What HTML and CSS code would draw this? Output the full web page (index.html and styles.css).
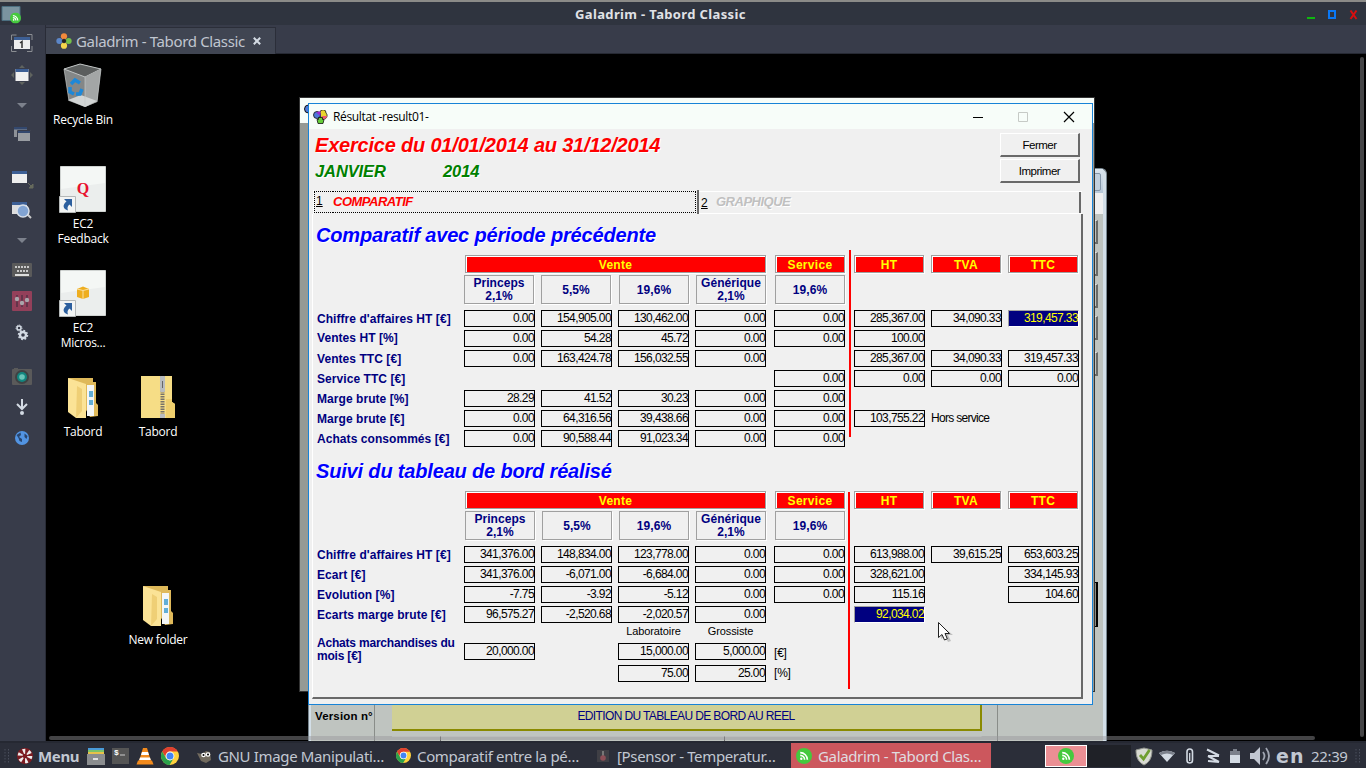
FILE: index.html
```html
<!DOCTYPE html>
<html lang="fr">
<head>
<meta charset="utf-8">
<title>Galadrim - Tabord Classic</title>
<link rel="stylesheet" href="styles.css">
</head>
<body>
<svg width="0" height="0" class="defs">
  <symbol id="feed" viewBox="0 0 16 16"><circle cx="8" cy="8" r="8" fill="#45c93e"/><circle cx="5.3" cy="10.8" r="1.2" fill="#fff"/><path d="M4.2 7.4a4.4 4.4 0 0 1 4.4 4.4M4.2 4.6a7.2 7.2 0 0 1 7.2 7.2" stroke="#fff" stroke-width="1.6" fill="none"/></symbol>
  <symbol id="chrome" viewBox="0 0 18 18"><circle cx="9" cy="9" r="9" fill="#ffd23e"/><path d="M1.2 4.5A9 9 0 0 1 16.8 4.5H9A4.5 4.5 0 0 0 5 11z" fill="#e0402f"/><path d="M1.2 4.5A9 9 0 0 0 8.6 18l4-6.8A4.5 4.5 0 0 1 5 11.2z" fill="#2ba24c"/><circle cx="9" cy="9" r="4.4" fill="#fff"/><circle cx="9" cy="9" r="3.5" fill="#4285f4"/></symbol>
  <symbol id="caret" viewBox="0 0 10 6"><path d="M0 0h10L5 5z" fill="#7c818c"/></symbol>
  <symbol id="shortcut" viewBox="0 0 17 17"><path d="M.5.5h16v16H.5z" fill="#f2f4f4" stroke="#b4b8b8"/><path d="M5 3h8v8l-2.500-2.500C8.500 10 8 12 9 14.500 4 13 3 9 7.500 5.500z" fill="#2c5f9e"/></symbol>
</svg>

<header class="titlebar">
  <svg class="appicon" width="20" height="18" viewBox="0 0 20 18"><path d="M1 .5h18v14H1z" fill="#7b94a0" stroke="#4c6f80"/><use href="#feed" x="9" y="6.500" width="11" height="11"/></svg>
  <span class="maintitle">Galadrim - Tabord Classic</span>
  <svg class="winbtns" width="56" height="12" viewBox="0 0 56 12"><path d="M1 9h8v2H1z" fill="#0fb60f"/><path d="M23 3h6v7h-6z" fill="none" stroke="#0a78f5" stroke-width="2"/><path d="M44.500 2.500l6 8.500M50.500 2.500l-6 8.500" stroke="#d80f0f" stroke-width="2"/></svg>
</header>

<div class="main">
  <nav class="side">
    <svg width="45" height="690" viewBox="0 0 45 690">
      <g fill="none" stroke="#8a8d92"><path d="M11.500 15v-5h5M27 9.500h5V15M11.500 21v5.500h5M27 26.500h5V21"/></g>
      <path d="M14 12h16v12H14z" fill="#eee"/><path d="M14 12h16v3H14z" fill="#3d5f95"/><path d="M20 18l2-1.500V23" stroke="#333" stroke-width="1.500" fill="none"/>
      <path d="M19 43l3-3 3 3zM19 57l3 3 3-3zM14 47l-3 3 3 3zM30 47l3 3-3 3z" fill="#5f635f"/>
      <path d="M15.500 44h13v12h-13z" fill="#f0f0f0"/><path d="M15.500 44h13v3h-13z" fill="#3d5f95"/>
      <use href="#caret" x="17" y="78" width="10" height="6"/>
      <path d="M14 102h13v10H14z" fill="#8d9197"/><path d="M14 102h13v2.500H14z" fill="#33486e"/><path d="M17.500 105.500h13v11h-13z" fill="#999da2" stroke="#383c4a"/><path d="M18 106h12v2H18z" fill="#33486e"/>
      <path d="M12 146h15v12H12z" fill="#eee"/><path d="M12 146h15v3H12z" fill="#3d5f95"/><path d="M33 159v4h-4zM28 158l4 4" fill="#666a5c" stroke="#666a5c"/>
      <path d="M12 177h15v12H12z" fill="#ddd"/><path d="M12 177h15v3H12z" fill="#3d5f95"/><path d="M27 189l4 4" stroke="#ccc" stroke-width="2"/><circle cx="23" cy="186" r="6" fill="#82a4d3" stroke="#d8dfe8" stroke-width="1.500"/>
      <use href="#caret" x="17" y="213" width="10" height="6"/>
      <rect x="12" y="238" width="20" height="14" rx="1" fill="#5a5a5a"/><path d="M15 242h14M17 246h12" stroke="#c9c9c9" stroke-width="2" stroke-dasharray="2 1"/><path d="M15 250h14" stroke="#ddd" stroke-width="2"/>
      <rect x="12" y="266" width="20" height="20" rx="1" fill="#93405a"/><path d="M17 270v12M22 270v12M27 270v12" stroke="#64344a" stroke-width="2"/><g fill="#a9a5ab"><circle cx="17" cy="274" r="2.200"/><circle cx="22" cy="278" r="2.200"/><circle cx="27" cy="275" r="2.200"/></g>
      <g fill="none" stroke="#d3dae3"><circle cx="19" cy="303" r="2" stroke-width="1.500"/><circle cx="19" cy="303" r="3" stroke-dasharray="1 1"/><circle cx="23" cy="310" r="3" stroke-width="2.400"/><circle cx="23" cy="310" r="4.500" stroke-dasharray="1.800 1.700" stroke-width="1.500"/></g>
      <rect x="12" y="344" width="20" height="16" rx="1" fill="#5a5a5a"/><path d="M14 343h4v2h-4z" fill="#5a5a5a"/><circle cx="22" cy="352" r="7" fill="#3e4244"/><circle cx="22" cy="352" r="5" fill="#12867f"/><circle cx="22" cy="352" r="2.800" fill="#69c5b9"/>
      <path d="M22 374v10M17 379l5 5 5-5" stroke="#d3dae3" stroke-width="2" fill="none"/><circle cx="22" cy="388" r="2" fill="#d3dae3"/>
      <circle cx="22" cy="413" r="7" fill="#5294e2"/><path d="M16.500 410l4-2.500.5 2.500-2 2 3 2v3l-2.500-1-1-3zM24.500 408.500l3 2.500-1 3-2-2z" fill="#29466f"/>
    </svg>
  </nav>
  <section class="view">
    <div class="tabstrip"><div class="tab">
      <svg width="16" height="16" viewBox="0 0 16 16"><circle cx="8" cy="3.300" r="3.100" fill="#f28a3c"/><circle cx="3.300" cy="8" r="3" fill="#5b86c8"/><circle cx="12.700" cy="8" r="3" fill="#73c04b"/><circle cx="8" cy="12.700" r="3.100" fill="#f5d64c"/><path d="M8 5.500L10.500 8 8 10.500 5.500 8z" fill="#222"/></svg>
      <span class="tabname">Galadrim - Tabord Classic</span>
      <svg width="8" height="8" viewBox="0 0 8 8"><path d="M.8.8l6.400 6.400M7.200.8L.8 7.200" stroke="#d3dae3" stroke-width="2"/></svg>
    </div></div>
    <div class="desktop"></div>
  </section>
</div>

<div class="dicon i1"><svg width="40" height="46" viewBox="0 0 40 46"><path d="M1 6L17 1l21 5-4 33-12 5-16-6z" fill="#848787"/><path d="M1 6l16-5 21 5-16 8z" fill="#5b5e5e" stroke="#bfc3c3"/><path d="M22 14l16-8-4 33-12 5z" fill="#a3a6a6"/><path d="M5 37l13-5 16 6-12 6z" fill="#d2d5d5"/><path d="M1 6l5 32M22 14v30M38 6l-4 33" stroke="#c3c7c7" stroke-width=".7"/><path d="M8 21l4-4 5 3M7 24v5l4 2M13 31h4l2-5" fill="none" stroke="#1e88d8" stroke-width="3.500"/></svg><span>Recycle Bin</span></div>
<div class="dicon i2"><svg width="48" height="48" viewBox="0 0 48 48"><path d="M1.500 1.500h45v45h-45z" fill="#f4f7f5" stroke="#cfd3d1"/><path d="M2 24l44-6v28H2z" fill="#ebeeed"/><text x="24" y="29" text-anchor="middle" class="qmark">Q</text><use href="#shortcut" x="0" y="31" width="17" height="17"/></svg><span>EC2<br>Feedback</span></div>
<div class="dicon i3"><svg width="48" height="48" viewBox="0 0 48 48"><path d="M1.500 1.500h45v45h-45z" fill="#f4f7f5" stroke="#cfd3d1"/><path d="M2 24l44-6v28H2z" fill="#ebeeed"/><path d="M18 20l6-2.500 6 2.500v8l-6 2-6-2z" fill="#eeae20"/><path d="M18 20l6 1.500 6-1.500M24 21.500V30" stroke="#fbe0a0" fill="none"/><use href="#shortcut" x="0" y="31" width="17" height="17"/></svg><span>EC2<br>Micros...</span></div>
<div class="dicon i4"><svg width="32" height="42" viewBox="0 0 32 42"><path d="M1 1h25v4h3v21l2 2v11l-8 1z" fill="#dfb95a"/><path d="M20 8h7v31h-7z" fill="#f3f6f7"/><path d="M22 14h4v6h-4zM22 23h4v5h-4z" fill="#62aed6"/><path d="M1 1l18 6v34H9L1 35z" fill="#fbe396"/><path d="M10 9l5 3v22l-6 7z" fill="#efcf76"/></svg><span>Tabord</span></div>
<div class="dicon i5"><svg width="36" height="44" viewBox="0 0 36 44"><path d="M1 1h31v26l3 2v14H1z" fill="#f6dd86"/><path d="M26 24h6v3l3 2v14h-9z" fill="#efcf6d"/><path d="M22.500 1v42" stroke="#77736a" stroke-width="4" stroke-dasharray="1.500 1"/><rect x="20" y="1" width="5" height="16" rx="1" fill="#b9bcc0"/><path d="M22.500 6v7" stroke="#666"/><path d="M20 39h5v4h-5z" fill="#b9bcc0"/></svg><span>Tabord</span></div>
<div class="dicon i6"><svg width="32" height="42" viewBox="0 0 32 42"><path d="M1 1h25v4h3v21l2 2v11l-8 1z" fill="#dfb95a"/><path d="M20 8h7v31h-7z" fill="#f3f6f7"/><path d="M22 14h4v6h-4zM22 23h4v5h-4z" fill="#62aed6"/><path d="M1 1l18 6v34H9L1 35z" fill="#fbe396"/><path d="M10 9l5 3v22l-6 7z" fill="#efcf76"/></svg><span>New folder</span></div>

<div class="aero">
  <div class="aerocap"><i></i></div><div class="aeromenu"></div>
  <div class="aerobody">
    <div class="sidebtns"><i></i><i></i><i></i><i></i><i class="gapped"></i><i class="big"></i></div>
    <div class="aerofoot">
      <b class="version">Version n°</b>
      <div class="edition"><div class="khaki">EDITION DU TABLEAU DE BORD AU REEL</div><div class="lower"><i></i><i></i><i></i></div></div>
      <div class="rule"></div>
    </div>
  </div>
</div>
<div class="backwin"><div class="backcap"><svg width="14" height="14" viewBox="0 0 14 14"><circle cx="4.500" cy="5" r="4" fill="#4e79d8" stroke="#111"/></svg></div></div>

<div class="window">
  <div class="wcap">
    <svg width="15" height="14" viewBox="0 0 15 14"><path d="M7 2.500A3 3 0 0 1 13 3c2 2 1 5-1 6H8z" fill="#e8d42c" stroke="#111" stroke-width=".8"/><path d="M9 6h5c0 2-2 3-4 3z" fill="#ef5570"/><circle cx="4" cy="5" r="3.500" fill="#4e79d8" stroke="#111" stroke-width=".8"/><path d="M3 2.500L7.500 1v5z" fill="#9c2ad0"/><path d="M5.500 7.500h4v2H11l-1 4H5l-1-4h1.500z" fill="#66cf3a" stroke="#111" stroke-width=".8"/></svg>
    <span class="wname">Résultat -result01-</span>
    <svg class="wctl" width="104" height="12" viewBox="0 0 104 12"><path d="M0 6.500h10" stroke="#000"/><path d="M45.500 1.500h9v9h-9z" stroke="#c6cac6" fill="none"/><path d="M91 1l10 10M101 1L91 11" stroke="#000" stroke-width="1.200"/></svg>
  </div>
  <div class="whead">
    <div class="heads"><div class="exercice">Exercice du 01/01/2014 au 31/12/2014</div><div class="mois"><span class="janvier">JANVIER</span><span>2014</span></div></div>
    <div class="btns"><div class="btn">Fermer</div><div class="btn">Imprimer</div></div>
  </div>
  <div class="tabs">
    <div class="t1"><u>1</u><b>COMPARATIF</b></div>
    <div class="t2"><u>2</u><b>GRAPHIQUE</b></div>
  </div>
  <div class="panel">
    <div class="section s1">
      <h2>Comparatif avec période précédente</h2>
      <div class="row hd"><span class="red wide c1">Vente</span><span class="red c5">Service</span><span class="red c6">HT</span><span class="red c7">TVA</span><span class="red c8">TTC</span></div>
      <div class="row sub"><span class="sb c1">Princeps<br>2,1%</span><span class="sb c2">5,5%</span><span class="sb shift c3">19,6%</span><span class="sb shift c4">Générique<br>2,1%</span><span class="sb shift c5">19,6%</span></div>
      <div class="row"><span class="lab">Chiffre d'affaires HT [€]</span><span class="cell c1">0.00</span><span class="cell c2">154,905.00</span><span class="cell c3">130,462.00</span><span class="cell c4">0.00</span><span class="cell c5">0.00</span><span class="cell c6">285,367.00</span><span class="cell c7">34,090.33</span><span class="cell sel c8">319,457.33</span></div>
      <div class="row"><span class="lab up">Ventes HT [%]</span><span class="cell c1">0.00</span><span class="cell c2">54.28</span><span class="cell c3">45.72</span><span class="cell c4">0.00</span><span class="cell c5">0.00</span><span class="cell c6">100.00</span></div>
      <div class="row"><span class="lab">Ventes TTC [€]</span><span class="cell c1">0.00</span><span class="cell c2">163,424.78</span><span class="cell c3">156,032.55</span><span class="cell c4">0.00</span><span class="cell c6">285,367.00</span><span class="cell c7">34,090.33</span><span class="cell c8">319,457.33</span></div>
      <div class="row"><span class="lab">Service TTC [€]</span><span class="cell c5">0.00</span><span class="cell c6">0.00</span><span class="cell c7">0.00</span><span class="cell c8">0.00</span></div>
      <div class="row"><span class="lab">Marge brute [%]</span><span class="cell c1">28.29</span><span class="cell c2">41.52</span><span class="cell c3">30.23</span><span class="cell c4">0.00</span><span class="cell c5">0.00</span></div>
      <div class="row"><span class="lab">Marge brute [€]</span><span class="cell c1">0.00</span><span class="cell c2">64,316.56</span><span class="cell c3">39,438.66</span><span class="cell c4">0.00</span><span class="cell c5">0.00</span><span class="cell c6">103,755.22</span><span class="note hors c7">Hors service</span></div>
      <div class="row"><span class="lab">Achats consommés [€]</span><span class="cell c1">0.00</span><span class="cell c2">90,588.44</span><span class="cell c3">91,023.34</span><span class="cell c4">0.00</span><span class="cell c5">0.00</span></div>
    </div>
    <div class="section s2">
      <h2>Suivi du tableau de bord réalisé</h2>
      <div class="row hd"><span class="red wide c1">Vente</span><span class="red c5">Service</span><span class="red c6">HT</span><span class="red c7">TVA</span><span class="red c8">TTC</span></div>
      <div class="row sub"><span class="sb shift c1">Princeps<br>2,1%</span><span class="sb shift c2">5,5%</span><span class="sb shift c3">19,6%</span><span class="sb shift c4">Générique<br>2,1%</span><span class="sb shift c5">19,6%</span></div>
      <div class="row"><span class="lab">Chiffre d'affaires HT [€]</span><span class="cell c1">341,376.00</span><span class="cell c2">148,834.00</span><span class="cell c3">123,778.00</span><span class="cell c4">0.00</span><span class="cell c5">0.00</span><span class="cell c6">613,988.00</span><span class="cell c7">39,615.25</span><span class="cell c8">653,603.25</span></div>
      <div class="row"><span class="lab">Ecart [€]</span><span class="cell c1">341,376.00</span><span class="cell c2">-6,071.00</span><span class="cell c3">-6,684.00</span><span class="cell c4">0.00</span><span class="cell c5">0.00</span><span class="cell c6">328,621.00</span><span class="cell c8">334,145.93</span></div>
      <div class="row"><span class="lab">Evolution [%]</span><span class="cell c1">-7.75</span><span class="cell c2">-3.92</span><span class="cell c3">-5.12</span><span class="cell c4">0.00</span><span class="cell c5">0.00</span><span class="cell c6">115.16</span><span class="cell c8">104.60</span></div>
      <div class="row"><span class="lab">Ecarts marge brute [€]</span><span class="cell c1">96,575.27</span><span class="cell c2">-2,520.68</span><span class="cell c3">-2,020.57</span><span class="cell c4">0.00</span><span class="cell sel c6">92,034.02</span></div>
      <div class="row names"><span class="note mid c3">Laboratoire</span><span class="note mid c4">Grossiste</span></div>
      <div class="row buy"><span class="lab two">Achats marchandises du<br>mois [€]</span><span class="cell c1">20,000.00</span><span class="cell c3">15,000.00</span><span class="cell c4">5,000.00</span><span class="note unit c5">[€]</span></div>
      <div class="row"><span class="cell c3">75.00</span><span class="cell c4">25.00</span><span class="note c5">[%]</span></div>
    </div>
  </div>
</div>
<svg class="cursor" width="18" height="24" viewBox="0 0 18 24"><path d="M4 4v14l4-3 3 6 3-1-3-6h5z" fill="#000" opacity=".2"/><path d="M1.500 1.500v15l3.500-3 2.500 5.500 2.800-1.200L8 12.500h4.500z" fill="#fff" stroke="#222"/></svg>
<div class="hscroll"></div><div class="vscroll"></div>

<footer class="taskbar">
  <svg class="grip" width="6" height="14" viewBox="0 0 6 14"><path d="M1 0v14M4.500 0v14" stroke="#4a4e5c" stroke-dasharray="1.500 1.500"/></svg>
  <svg class="menuicon" width="16" height="16" viewBox="0 0 16 16"><circle cx="8" cy="8" r="8" fill="#7d1c22"/><circle cx="8" cy="8" r="4.800" fill="none" stroke="#eee" stroke-width="5" stroke-dasharray="2.300 2.700"/><circle cx="8" cy="8" r="2" fill="#7d1c22"/></svg>
  <b class="menu">Menu</b>
  <svg class="q1" width="43" height="20" viewBox="0 0 43 20"><path d="M1 2h16v3H1z" fill="#4a9bd8"/><path d="M1 4h16v2H1z" fill="#7bc36a"/><path d="M1 6h16v3H1z" fill="#e8c14a"/><path d="M0 8h18v11H0z" fill="#8b8d8f"/><path d="M6 13h5" stroke="#fff" stroke-width="1.500"/><path d="M25 2h17v16H25z" fill="#555"/><text x="27" y="9" class="term">$</text><path d="M33 9h5" stroke="#ccc"/></svg>
  <svg class="vlc" width="18" height="18" viewBox="0 0 18 18"><path d="M7 1h4l4 13H3z" fill="#f28a1c"/><path d="M6 5h6l1 3H5zM4 10.500h10l.8 2.500H3.200z" fill="#fff"/><path d="M2 13.500h14l1.500 4H.5z" fill="#f28a1c"/></svg>
  <svg class="chr" width="18" height="18"><use href="#chrome"/></svg>
  <div class="task gimp"><svg width="16" height="14" viewBox="0 0 16 14"><path d="M1 4l5 1 4-3 4 1 1 8-5 3-5-2z" fill="#716a5e"/><circle cx="7.500" cy="6" r="2.300" fill="#fff"/><circle cx="12" cy="5.500" r="2.300" fill="#fff"/><circle cx="7.500" cy="6" r="1"/><circle cx="12" cy="5.500" r="1"/></svg><span>GNU Image Manipulati…</span></div>
  <div class="task comparatif"><svg width="15" height="15"><use href="#chrome"/></svg><span>Comparatif entre la pé…</span></div>
  <div class="task psensor"><svg width="12" height="12" viewBox="0 0 12 12"><path d="M0 0h12v12H0z" fill="#3f3f45"/><path d="M5 1h2v5H5z" fill="#777"/><circle cx="6" cy="8" r="2.800" fill="#8d4f57"/></svg><span>[Psensor - Temperatur…</span></div>
  <div class="task active"><svg width="16" height="16"><use href="#feed"/></svg><span>Galadrim - Tabord Clas…</span></div>
  <div class="pager"><div class="here"><svg width="16" height="16"><use href="#feed"/></svg></div><div class="there"></div></div>
  <svg class="tray" width="138" height="22" viewBox="0 0 138 22"><path d="M9 3l8 2c0 7-2 12-8 15-6-3-8-8-8-15z" fill="#d8dad2" stroke="#8f928c"/><path d="M5 10l3.500 4 6-9" stroke="#6f9e2f" stroke-width="2.800" fill="none"/><path d="M24 8q8-4.500 16 0l-8 9z" fill="#d3dae3"/><path d="M24 8q8-4.500 16 0l-2 2q-6-3-12 0z" fill="#7b808b"/><rect x="52" y="4" width="5.500" height="14" rx="2.700" fill="none" stroke="#d3dae3" stroke-width="1.600"/><path d="M54.700 8v8" stroke="#d3dae3" stroke-width="1.300"/><path d="M72 4.500l12 6M84 11H73M73 11l11 6M84 17l-11-1" stroke="#d3dae3" stroke-width="2" fill="none"/><path d="M95 6h10v12H95z" fill="#d3dae3"/><path d="M98 4h4v2h3v4H95V6h3z" fill="#7b808b"/><path d="M115 8h4l6-6v18l-6-6h-4z" fill="#c2c7d2"/><path d="M128 7q3 4 0 8M131 3q6 8 0 16" stroke="#a0a5b1" stroke-width="1.800" fill="none"/></svg>
  <b class="lang">en</b><span class="clock">22:39</span>
  <svg class="grip2" width="6" height="14" viewBox="0 0 6 14"><path d="M1 0v14M4.500 0v14" stroke="#4a4e5c" stroke-dasharray="1.500 1.500"/></svg>
</footer>
</body>
</html>
```
FILE: styles.css
```css
* { box-sizing: border-box; }
body { margin: 0; width: 1366px; height: 768px; overflow: hidden; background: #000; display: flex; flex-direction: column; font-family: "Liberation Sans", Arial, sans-serif; font-size: 12px; color: #000; }
svg { display: block; flex: none; }
.defs { position: absolute; }

.titlebar { height: 25px; flex: none; border-top: 2px solid #8b8b88; background: #2f343f; display: flex; align-items: center; }
.appicon { margin: 3px 0 0 1px; }
.maintitle { font: bold 13px "Noto Sans", sans-serif; letter-spacing: .36px; color: #e0e2e6; margin-left: 554px; white-space: nowrap; }
.winbtns { margin: 0 4px 0 auto; }
.main { flex: 1; display: flex; min-height: 0; }
.side { width: 46px; flex: none; background: #383c4a; border-right: 1px solid #292c37; }
.view { flex: 1; display: flex; flex-direction: column; }
.tabstrip { height: 29px; background: #383c4a; border-bottom: 1px solid #262933; display: flex; padding-top: 2px; }
.tab { width: 230px; height: 27px; background: #404552; border: 1px solid #2b2e39; border-left: 0; border-bottom: 0; display: flex; align-items: center; padding-left: 10px; gap: 4px; }
.tabname { font: 15px "Noto Sans", sans-serif; letter-spacing: -.35px; color: #c0c6d0; width: 173px; white-space: nowrap; }
.desktop { flex: 1; background: #000; }

.dicon { position: absolute; width: 80px; display: flex; flex-direction: column; align-items: center; gap: 3px; color: #fff; font: 12px/15px "Open Sans", "Noto Sans", sans-serif; text-align: center; white-space: nowrap; }
.dicon span { letter-spacing: -.25px; }
.i1 { left: 43px; top: 63px; }
.i2 { left: 43px; top: 165px; }
.i3 { left: 43px; top: 269px; }
.i4 { left: 43px; top: 377px; gap: 5px; }
.i5 { left: 118px; top: 375px; gap: 5px; }
.i6 { left: 118px; top: 585px; gap: 5px; }
.qmark { font: 700 16px "Liberation Serif", serif; fill: #e8112d; }

.aero { position: absolute; left: 308px; top: 168px; width: 799px; height: 573px; background: #d3dfe8; border: 1px solid #77858e; border-bottom: 0; border-radius: 6px 6px 0 0; padding: 0 3px 0 2px; display: flex; flex-direction: column; }
.aerocap { height: 24px; background: linear-gradient(#dbe5ee, #b7c8d8); display: flex; justify-content: flex-end; }
.aerocap i { width: 20px; height: 18px; margin: 4px 2px; border: 1px solid #8496a8; border-radius: 2px; background: #c1d0de; }
.aeromenu { height: 21px; background: #f0f0f0; }
.aerobody { flex: 1; background: #bfc4c0; display: flex; flex-direction: column; }
.sidebtns { height: 491px; padding: 6px 5px 0 0; display: flex; flex-direction: column; align-items: flex-end; gap: 8px; }
.sidebtns i { width: 20px; height: 24px; background: #c0c4c0; border: 1px solid #e8e8e8; border-right: 2px solid #696b69; border-bottom: 2px solid #696b69; }
.sidebtns .gapped { margin-top: 4px; }
.sidebtns .big { height: 45px; margin-top: 198px; background: #8e8f85; border: 1px solid #000; border-right: 2px solid #000; }
.aerofoot { flex: 1; display: flex; }
.version { width: 64px; padding: 5px 0 0 4px; font-size: 11.5px; letter-spacing: .15px; border-right: 1px solid #898d89; white-space: nowrap; }
.edition { width: 590px; margin-left: 17px; display: flex; flex-direction: column; gap: 5px; }
.khaki { height: 26px; background: #d0d094; border: solid #8a8a00; border-width: 0 2px 2px 0; color: #000080; text-align: center; line-height: 23px; font-size: 12px; letter-spacing: -.62px; }
.lower { flex: 1; display: flex; }
.lower i { border-top: 1px solid #d8dbd8; border-right: 1px solid #696969; width: 49px; }
.lower i:nth-child(2) { width: 284px; }
.lower i:nth-child(3) { flex: 1; border-right-color: #bfc4c0; }
.rule { width: 16px; border-right: 1px solid #898d89; }
.backwin { position: absolute; left: 299px; top: 97px; width: 796px; height: 595px; background: #959a95; border: 1px solid #333; }
.backcap { height: 25px; background: #f7fdf9; padding: 6px 0 0 4px; }

.window { position: absolute; left: 308px; top: 103px; width: 785px; height: 602px; border: 1px solid #1883d7; background: #f0f0f0; display: flex; flex-direction: column; }
.wcap { height: 25px; background: #f7fdf9; display: flex; align-items: center; padding-left: 4px; gap: 5px; }
.wname { font: 12px "Open Sans", "Noto Sans", sans-serif; letter-spacing: -.35px; white-space: nowrap; }
.wctl { margin-left: auto; margin-right: 15px; }
.whead { height: 61px; display: flex; justify-content: space-between; padding: 4px 12px 0 6px; white-space: nowrap; }
.exercice { font: italic bold 20px/24px "Liberation Sans", Arial, sans-serif; letter-spacing: -.2px; color: red; text-shadow: 1px 1px #fff; }
.mois { font: italic bold 16.5px/29px "Liberation Sans", Arial, sans-serif; letter-spacing: -.1px; color: #008000; display: flex; text-shadow: 1px 1px #fff; }
.janvier { width: 128px; }
.btns { display: flex; flex-direction: column; gap: 2px; }
.btn { width: 80px; height: 24px; border: 1px solid #fff; border-right: 2px solid #696969; border-bottom: 2px solid #696969; text-align: center; line-height: 22px; font-size: 11.5px; letter-spacing: -.5px; }
.tabs { height: 24px; display: flex; padding-left: 4px; }
.tabs b { font-style: italic; font-size: 13px; letter-spacing: -.5px; }
.t1 { width: 386px; display: flex; border-right: 2px solid #696969; border-left: 1px solid #fff; padding: 1px 1px 0 0; }
.t1 u, .t1 b { border: 1px dotted #000; border-width: 1px 0; height: 22px; line-height: 19px; }
.t1 u { border-left-width: 1px; padding-left: 1px; width: 19px; }
.t1 b { flex: 1; border-right-width: 1px; color: red; }
.t2 { width: 383px; margin-top: 1px; border-top: 1px solid #fff; border-bottom: 1px solid #fff; display: flex; padding-left: 2px; background: linear-gradient(#696969, #696969) 380px 0 / 2px 23px no-repeat; }
.t2 u { line-height: 22px; width: 15px; }
.t2 b { color: #c0c0c0; line-height: 19px; text-shadow: 1px 1px #fff; }
.panel { width: 771px; height: 485px; margin-left: 3px; border: 1px solid #fff; border-right: 2px solid #696969; border-bottom: 2px solid #696969; border-top: 0; padding-top: 9px; }
.section { position: relative; height: 236px; }
.s1::after, .s2::after { content: ""; position: absolute; width: 2px; background: red; }
.s1::after { left: 536px; top: 27px; height: 187px; }
.s2::after { left: 535px; top: 33px; height: 197px; }
h2 { margin: 0; height: 32px; padding-left: 3px; font: italic bold 20px/24px "Liberation Sans", Arial, sans-serif; letter-spacing: -.17px; color: blue; text-shadow: 1px 1px #fff; white-space: nowrap; }
.row { height: 20px; display: grid; grid-template-columns: 151px 77px 77px 77px 79px 80px 77px 77px 71px; align-items: start; }
.c1 { grid-column: 2; } .c2 { grid-column: 3; } .c3 { grid-column: 4; } .c4 { grid-column: 5; }
.c5 { grid-column: 6; } .c6 { grid-column: 7; } .c7 { grid-column: 8; } .c8 { grid-column: 9; }
.row > * { grid-row: 1; }
.cell { width: 71px; height: 17px; border: 1px solid #000; text-align: right; line-height: 15px; letter-spacing: -.6px; white-space: nowrap; }
.sel { background: #000080; color: #ff0; border-color: #a0a0a0 #fff #fff #a0a0a0; }
.lab { grid-column: 1; color: #000080; font-weight: bold; line-height: 19px; padding-left: 4px; white-space: nowrap; letter-spacing: .06px; }
.up { line-height: 17px; }
.hd .red { width: 70px; height: 18px; border: 1px solid #a0a0a0; box-shadow: inset 1px 1px #fff, 1px 1px #fff; background: red; color: #ff0; font-weight: bold; text-align: center; line-height: 18px; letter-spacing: .3px; margin-left: 1px; }
.hd .red.c6, .hd .red.c7, .hd .red.c8 { margin-left: 0; }
.hd .wide { width: 301px; grid-column: 2 / 6; }
.row.sub { height: 35px; }
.sb { width: 70px; height: 29px; border: 1px solid #a0a0a0; box-shadow: 1px 1px #fff; color: #000080; font-weight: bold; text-align: center; line-height: 13px; padding-top: 1px; letter-spacing: .05px; display: grid; place-content: center; }
.shift { margin-left: 1px; }
.note { line-height: 17px; white-space: nowrap; letter-spacing: -.2px; }
.hors { letter-spacing: -.7px; }
.row.names { height: 17px; }
.mid { text-align: center; width: 71px; font-size: 11px; letter-spacing: -.1px; line-height: 11px; }
.row.buy { height: 22px; }
.two { line-height: 13px; margin-top: -6px; letter-spacing: -.2px; }
.unit { padding-top: 2px; }
.cursor { position: absolute; left: 937px; top: 621px; }
.hscroll { position: absolute; left: 49px; top: 736px; width: 1266px; height: 4px; border-radius: 2px; background: rgba(150,150,155,.45); }
.vscroll { position: absolute; left: 1360px; top: 57px; width: 4px; height: 680px; border-radius: 2px; background: rgba(150,150,155,.45); }

.taskbar { position: relative; height: 27px; flex: none; border-top: 2px solid #252832; background: #2b2e39; display: flex; align-items: center; color: #c2c8d2; font: 15px "Noto Sans", sans-serif; letter-spacing: -.35px; white-space: nowrap; }
.grip { margin-left: 4px; }
.menuicon { margin-left: 7px; }
.menu { margin-left: 5px; width: 48px; font-size: 15px; }
.q1 { margin-left: 1px; }
.vlc { margin-left: 6px; }
.chr { margin-left: 7px; }
.term { font: bold 8px "Liberation Mono", monospace; fill: #fff; }
.task { display: flex; align-items: center; gap: 6px; }
.gimp { margin-left: 17px; width: 200px; }
.comparatif { width: 201px; }
.psensor { width: 194px; gap: 8px; }
.active { width: 200px; height: 25px; background: #cc575d; padding-left: 5px; color: #e0dce0; }
.pager { display: flex; margin-left: 54px; height: 22px; }
.here { width: 42px; border: 1px solid #fff; background: #eb8f94; display: grid; place-items: center; }
.there { width: 44px; background: #1f2127; }
.tray { margin-left: 4px; }
.lang { font: bold 19px/22px "DejaVu Sans", sans-serif; letter-spacing: 1px; width: 35px; margin-left: 3px; }
.clock { font-size: 15px; }
.grip2 { margin-left: auto; margin-right: 5px; }
```
